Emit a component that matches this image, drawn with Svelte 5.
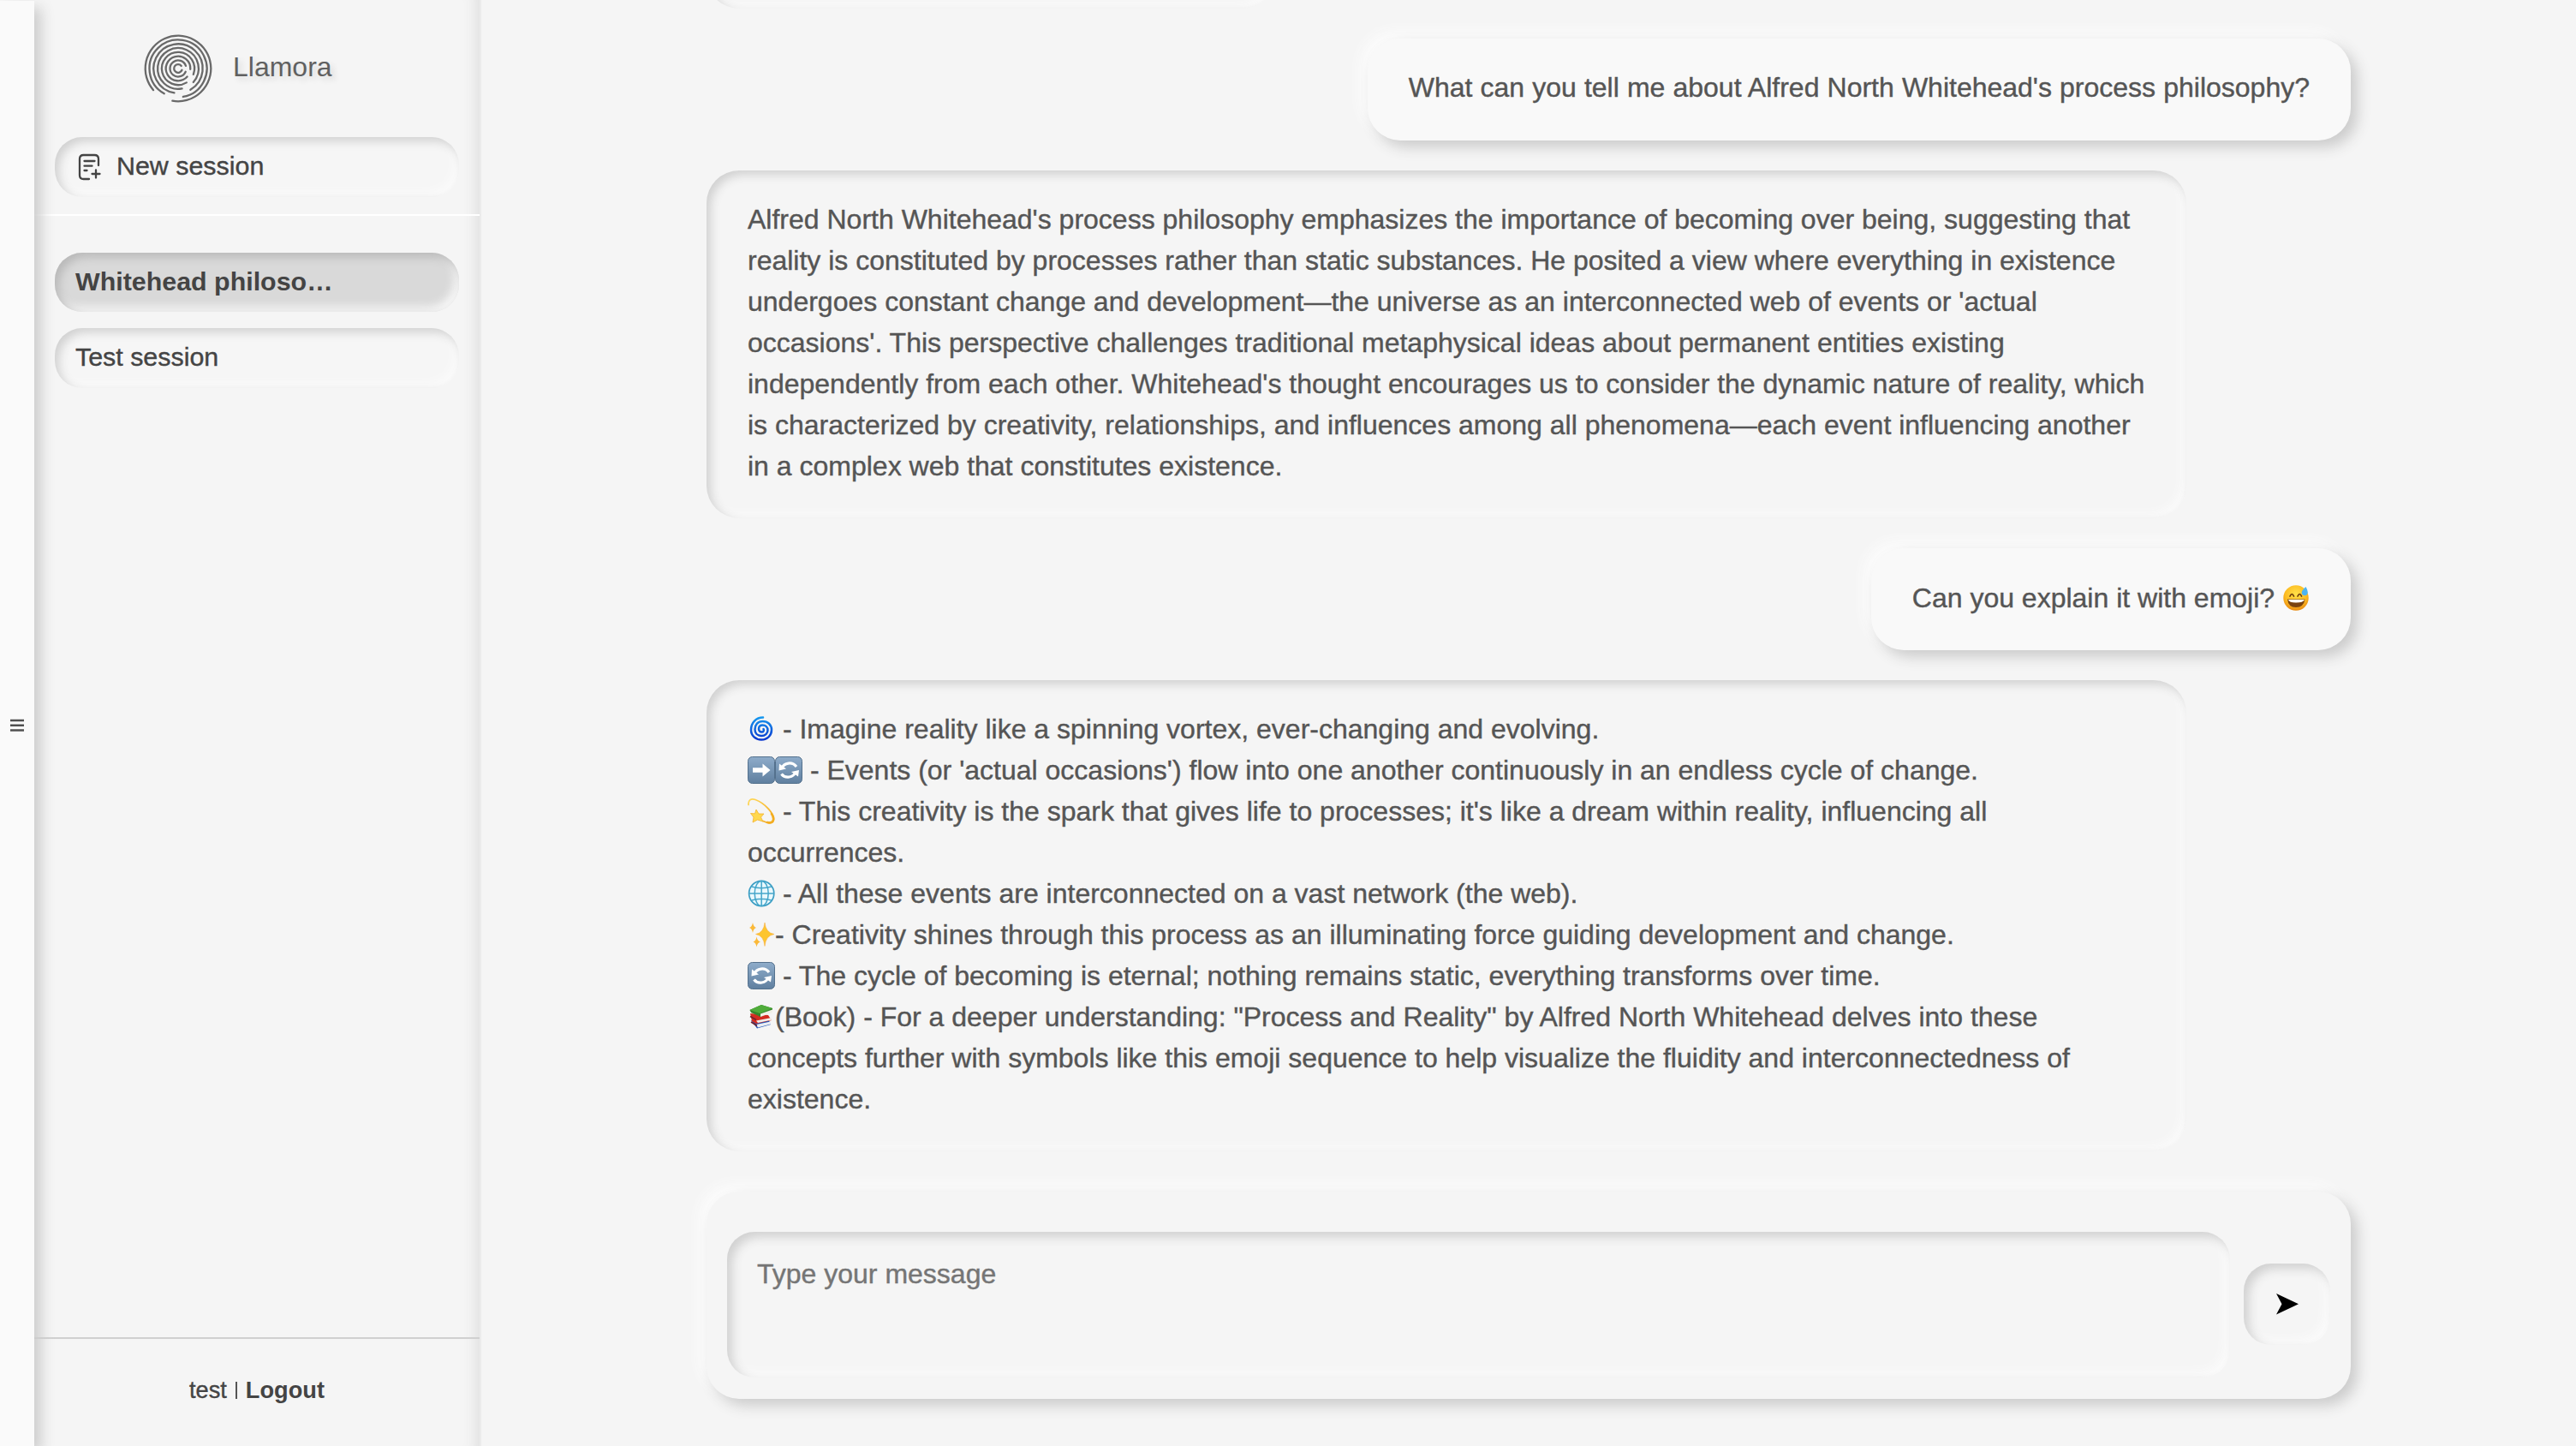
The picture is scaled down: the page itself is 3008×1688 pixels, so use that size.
<script>
  const sessions = [
    { title: 'Whitehead philoso…', active: true },
    { title: 'Test session', active: false }
  ];

  // Radius of each logo ring and its start and end angle in degrees, clockwise
  const rings = [
    [38.3, 139, 460],
    [33.5, 119, 440],
    [28.7, 99, 420],
    [23.9, 79, 402],
    [19.1, 59, 381],
    [14.3, 42, 363],
    [9.5, 23, 341],
    [4.8, 22, 321]
  ];

  function arc([r, from, to]) {
    const at = (deg) => {
      const a = (deg * Math.PI) / 180;
      return `${(42 + r * Math.cos(a)).toFixed(2)} ${(42 + r * Math.sin(a)).toFixed(2)}`;
    };
    return `M${at(from)}A${r} ${r} 0 ${to - from > 180 ? 1 : 0} 1 ${at(to)}`;
  }

  const explanation = [
    "Alfred North Whitehead's process philosophy emphasizes the importance of becoming over being, suggesting that",
    'reality is constituted by processes rather than static substances. He posited a view where everything in existence',
    "undergoes constant change and development—the universe as an interconnected web of events or 'actual",
    "occasions'. This perspective challenges traditional metaphysical ideas about permanent entities existing",
    "independently from each other. Whitehead's thought encourages us to consider the dynamic nature of reality, which",
    'is characterized by creativity, relationships, and influences among all phenomena—each event influencing another',
    'in a complex web that constitutes existence.'
  ];

  const emojiLines = [
    { icons: ['cyclone'], text: ' - Imagine reality like a spinning vortex, ever-changing and evolving.' },
    { icons: ['right', 'cycle'], text: " - Events (or 'actual occasions') flow into one another continuously in an endless cycle of change." },
    { icons: ['dizzy'], text: " - This creativity is the spark that gives life to processes; it's like a dream within reality, influencing all" },
    { icons: [], text: 'occurrences.' },
    { icons: ['globe'], text: ' - All these events are interconnected on a vast network (the web).' },
    { icons: ['sparkles'], text: '- Creativity shines through this process as an illuminating force guiding development and change.' },
    { icons: ['cycle'], text: ' - The cycle of becoming is eternal; nothing remains static, everything transforms over time.' },
    { icons: ['books'], text: '(Book) - For a deeper understanding: "Process and Reality" by Alfred North Whitehead delves into these' },
    { icons: [], text: 'concepts further with symbols like this emoji sequence to help visualize the fluidity and interconnectedness of' },
    { icons: [], text: 'existence.' }
  ];
</script>

{#snippet emoji(name)}
  <svg class="emoji" viewBox="0 0 32 32" aria-hidden="true">
    {#if name === 'cyclone'}
      <path d="M18 2.500C10 2.500 4 8.500 4 17C4 24 9.500 28.500 16 28.500C23.500 28.500 28 23 28 17C28 11 23.500 7 17.500 7C12 7 8.500 11 8.500 16.500C8.500 21 11.500 24 16 24C20.500 24 23.500 21 23.500 17.500C23.500 14 21 11.500 17.500 11.500C14.500 11.500 13 13.500 13 16C13 18 14.500 19.500 16.500 19.500C18.500 19.500 19.500 17.500 18.500 16" fill="none" stroke="url(#swirl)" stroke-width="2.500" stroke-linecap="round" />
    {:else if name === 'right'}
      <rect x=".5" y=".5" width="31" height="31" rx="5" fill="url(#steel)" stroke="#54718d" />
      <path d="M6 13.200H17.500V8.500L26.500 16L17.500 23.500V18.800H6Z" fill="#fff" />
    {:else if name === 'cycle'}
      <rect x=".5" y=".5" width="31" height="31" rx="5" fill="url(#steel)" stroke="#54718d" />
      <path d="M8 13.500C10.500 7.500 20 5.500 25 12" fill="none" stroke="#fff" stroke-width="3.200" />
      <path d="M24 18.500C21.500 24.500 12 26.500 7.500 20.500" fill="none" stroke="#fff" stroke-width="3.200" />
      <path d="M5 8.500L4.500 16.500L13 14.500ZM27 23.500L28 16L19 18Z" fill="#fff" />
    {:else if name === 'dizzy'}
      <path d="M1 8.500C.5 3.500 3.500.500 9 2.500C21 7 31 19 30.500 26C30 31 23 30 18 27.500" fill="none" stroke="url(#gold)" stroke-width="1.800" stroke-linecap="round" />
      <path d="M28 19C32 25 30 31 23 29" fill="none" stroke="#f3ad20" stroke-width="2.600" stroke-linecap="round" />
      <path d="M10 14L13 19L19 19L15.500 23L18 28L11.500 26L6 29L7 23L3.500 18.500L8.500 18.800Z" fill="#ffd84d" stroke="#f2b32e" stroke-width=".8" stroke-linejoin="round" />
    {:else if name === 'globe'}
      <circle cx="16.200" cy="16" r="14.600" fill="#e9f8fd" stroke="#3b9dc3" stroke-width="1.700" />
      <g fill="none" stroke="#45a6ca" stroke-width="1.500">
        <ellipse cx="16.200" cy="16" rx="8" ry="14.600" />
        <path d="M16.200 1.500V30.500M1.600 16H30.800M4.500 8Q16 11.500 28 8M4.500 24Q16 20.500 28 24" />
      </g>
    {:else if name === 'sparkles'}
      <path d="M20 2Q21.200 14 31 15.500Q21.200 17 20 29.500Q18.800 17 9.500 15.500Q18.800 14 20 2Z" fill="#fdc52f" stroke="#f7a93c" stroke-width=".5" />
      <path d="M6 2Q6.800 7 10 8Q6.800 9 6 14Q5.200 9 2 8Q5.200 7 6 2ZM10.500 18.500Q11.300 23.500 15 24.500Q11.300 25.500 10.500 30.500Q9.700 25.500 6.500 24.500Q9.700 23.500 10.500 18.500Z" fill="#fbb938" />
    {:else}
      <path d="M4 20L24 18L27 25L11 29.500Z" fill="#2455b4" />
      <path d="M10 25L27 21.500V24.500L12 28.500Z" fill="#e9edf3" />
      <path d="M3 12L24 14L28 20L10 24L5 21Z" fill="#d32b20" />
      <path d="M10 20.500L28 17L28.500 19.500L12 23Z" fill="#f1eee9" />
      <path d="M2.500 8L16 2L29 6L29 9L15 16L4 11Z" fill="#35852c" />
      <path d="M2.500 8L16 2L29 6L14.500 12Z" fill="#4fac3a" />
      <path d="M15 12.500L29 7.500V11L15 16Z" fill="#f1f0e8" />
      <path d="M3 15.500L10 19.500M4 22L11 26.500" stroke="#6d2230" stroke-width="1.500" />
    {/if}
  </svg>
{/snippet}

<svg class="defs" width="0" height="0" aria-hidden="true">
  <defs>
    <linearGradient id="steel" x1="0" y1="0" x2="0" y2="1">
      <stop offset="0" stop-color="#8eacca" /><stop offset="1" stop-color="#5f7f9f" />
    </linearGradient>
    <linearGradient id="swirl" x1="0" y1="0" x2="0" y2="1">
      <stop offset="0" stop-color="#1597ee" /><stop offset="1" stop-color="#0b38cf" />
    </linearGradient>
    <linearGradient id="gold" x1="0" y1="0" x2="1" y2="1">
      <stop offset="0" stop-color="#ffd95a" /><stop offset="1" stop-color="#f2a61c" />
    </linearGradient>
    <radialGradient id="face" cx=".5" cy=".35" r=".65">
      <stop offset="0" stop-color="#ffe14a" /><stop offset=".65" stop-color="#fdbc22" /><stop offset="1" stop-color="#e88a12" />
    </radialGradient>
  </defs>
</svg>

<div class="app">
  <button class="handle" aria-label="Toggle sidebar">
    <svg width="16" height="16" viewBox="0 0 16 16"><path d="M0 2H16M0 7.700H16M0 13.500H16" stroke="#505050" stroke-width="2.400" /></svg>
  </button>

  <aside>
    <header class="brand">
      <svg class="logo" viewBox="0 0 84 84" aria-hidden="true">
        {#each rings as ring}<path d={arc(ring)} />{/each}
      </svg>
      <span>Llamora</span>
    </header>

    <div class="new">
      <button class="pill">
        <svg class="note" viewBox="0 0 28 32" aria-hidden="true">
          <path d="M24 14V6.500Q24 2 19.500 2H6.500Q2 2 2 6.500V25.500Q2 30 6.500 30H13M7.500 9H19.500M7.500 14.700H16.500M7.500 20H10.500M21 19.500V28.500M16.500 24H25.500" />
        </svg>
        New session
      </button>
    </div>

    <nav>
      {#each sessions as session}
        <button class="pill" class:active={session.active}>{session.title}</button>
      {/each}
    </nav>

    <footer><span>test</span><i></i><b>Logout</b></footer>
  </aside>

  <main>
    <section class="chat">
      <div class="bubble bot earlier"></div>
      <div class="bubble user question">What can you tell me about Alfred North Whitehead's process philosophy?</div>
      <div class="bubble bot">
        {#each explanation as line}<p>{line}</p>{/each}
      </div>
      <div class="bubble user">
        Can you explain it with emoji? <svg class="emoji" viewBox="0 0 32 32" aria-hidden="true">
          <circle cx="16" cy="16" r="14.700" fill="url(#face)" />
          <path d="M6 17.500H26.500Q25 27 16 27Q7 27 6 17.500Z" fill="#7a4310" />
          <path d="M7 18H26Q24.500 21.500 16 21.500Q8 21.500 7 18Z" fill="#fff" />
          <path d="M9 14Q11.300 9 13.500 14M18 14Q20.300 9 22.500 14" fill="none" stroke="#6b3a0c" stroke-width="1.700" stroke-linecap="round" />
          <path d="M27.500 3Q21.500 8 23 11.500Q25 14.500 28.500 12.500Q31.500 10 27.500 3Z" fill="#4db4f1" />
        </svg>
      </div>
      <div class="bubble bot">
        {#each emojiLines as line}
          <p>{#each line.icons as icon}{@render emoji(icon)}{/each}{line.text}</p>
        {/each}
      </div>
    </section>

    <form>
      <textarea placeholder="Type your message"></textarea>
      <button type="button" aria-label="Send">
        <svg width="26" height="25" viewBox="0 0 26 25"><path d="M0 0L26 12.300L0 24.600L6.500 12.300Z" /></svg>
      </button>
    </form>
  </main>
</div>

<style>
  :global(body) {
    background: #f5f5f5;
    overflow: hidden;
  }
  .defs { display: block; height: 0; }
  .app {
    display: flex;
    height: 1688px;
    box-sizing: border-box;
    background: #f5f5f5;
    color: #444;
    font: 32px/48px 'Liberation Sans', Arial, sans-serif;
    -webkit-text-stroke: 0.4px;
  }
  button {
    font: inherit;
    color: inherit;
    border: 0;
    padding: 0;
  }
  .handle {
    position: relative;
    flex: none;
    width: 40px;
    margin-top: 1px;
    padding-top: 4px;
    background: #fafafa;
    box-shadow: 8px 8px 16px #ccc;
    display: flex;
    align-items: center;
    justify-content: center;
  }
  aside {
    flex: none;
    width: 522px;
    box-sizing: border-box;
    border-right: 2px solid #ebebeb;
    display: flex;
    flex-direction: column;
    box-shadow: inset -20px 0 16px -16px #dedede;
  }
  .brand {
    height: 160px;
    box-sizing: border-box;
    padding: 38px 0 0 126px;
    display: flex;
    align-items: flex-start;
    gap: 22px;
    color: #606060;
    font-size: 32px;
    line-height: 80px;
    text-shadow: 4px 4px 6px #dadada;
    -webkit-text-stroke: 0;
  }
  .logo {
    width: 84px;
    height: 84px;
    fill: none;
    stroke: #696969;
    stroke-width: 2.3;
    stroke-linecap: round;
  }
  .new {
    height: 92px;
    box-sizing: border-box;
    padding: 0 24px;
    border-bottom: 2px solid #fff;
  }
  .pill {
    display: flex;
    align-items: center;
    width: 100%;
    height: 70px;
    border-radius: 32px;
    padding: 0 24px 4px;
    font-size: 30.4px;
    background: #f6f6f6;
    box-shadow: inset 5px 5px 11px #d1d1d1, inset -5px -5px 11px #fbfbfb;
  }
  .note {
    width: 28px;
    height: 32px;
    margin: 4px 17px 0 3px;
    fill: none;
    stroke: #444;
    stroke-width: 2.3;
    stroke-linecap: round;
  }
  nav {
    flex: 1;
    padding: 43px 24px;
    display: flex;
    flex-direction: column;
    gap: 18px;
  }
  .pill.active {
    height: 69px;
    margin-bottom: 1px;
    background: #d9d9d9;
    font-weight: 700;
    -webkit-text-stroke: 0;
    box-shadow: inset 5px 5px 11px #b8b8b8, inset -5px -5px 11px #fafafa;
  }
  footer {
    height: 127px;
    box-sizing: border-box;
    padding-bottom: 6px;
    border-top: 2px solid #d0d0d0;
    display: flex;
    justify-content: center;
    align-items: center;
    font-size: 27.2px;
  }
  footer b { -webkit-text-stroke: 0; }
  footer i {
    width: 2px;
    height: 20px;
    margin: 0 10px;
    background: #555;
  }
  main {
    flex: 1;
    display: flex;
    flex-direction: column;
    padding: 0 263px;
  }
  .chat {
    display: flex;
    flex-direction: column;
    gap: 35.2px;
    color: #555;
  }
  .bubble {
    box-sizing: border-box;
    padding: 33.2px 48px 37.2px;
    border-radius: 38px;
    white-space: pre;
  }
  .bubble p { margin: 0; }
  .user {
    align-self: flex-end;
    background: #f9f9f9;
    box-shadow: 8px 8px 16px #ccc, -8px -8px 16px #fcfcfc;
  }
  .question { word-spacing: 0.2px; }
  .bot {
    width: 1728px;
    box-shadow: inset 5px 5px 11px #d1d1d1, inset -5px -5px 11px #fbfbfb;
  }
  .earlier {
    width: 664px;
    height: 118px;
    margin-top: -108px;
  }
  .emoji {
    width: 32px;
    height: 32px;
    vertical-align: -5px;
  }
  form {
    margin-top: 47px;
    height: 242px;
    box-sizing: border-box;
    padding: 47px 24px 25px;
    border-radius: 38px;
    display: flex;
    align-items: center;
    gap: 16px;
    box-shadow: 8px 8px 16px #ccc, -8px -8px 16px #fcfcfc;
  }
  textarea {
    flex: 1;
    height: 170px;
    box-sizing: border-box;
    border: 0;
    border-radius: 32px;
    resize: none;
    padding: 25px 35px;
    background: #f5f5f5;
    font: inherit;
    box-shadow: inset 6px 6px 12px #d1d1d1, inset -6px -6px 12px #fbfbfb;
  }
  textarea::placeholder { color: #757575; }
  form button {
    width: 101px;
    height: 95px;
    margin-bottom: 2px;
    border-radius: 32px;
    background: #f5f5f5;
    box-shadow: inset 6px 6px 12px #d1d1d1, inset -6px -6px 12px #fbfbfb;
    display: flex;
    align-items: center;
    justify-content: center;
    fill: #000;
  }
</style>
